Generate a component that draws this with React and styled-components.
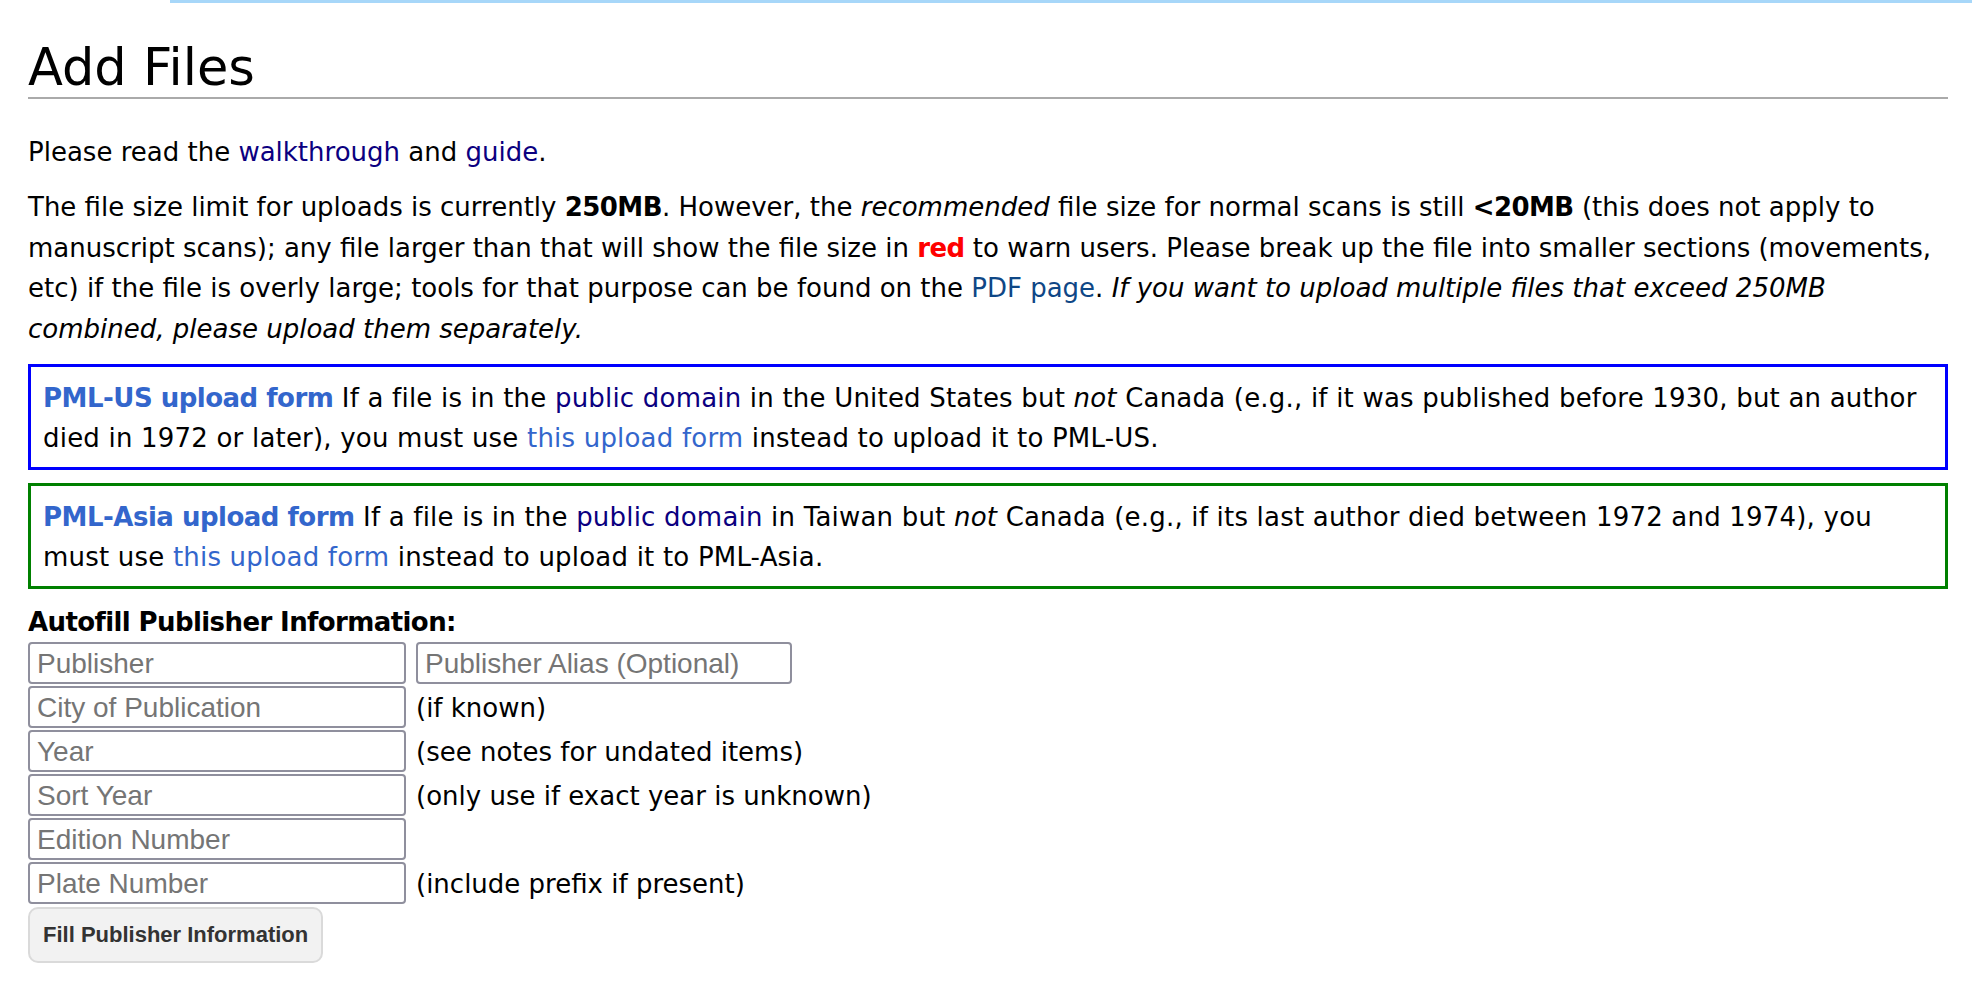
import React from 'react'
import styled, { createGlobalStyle } from 'styled-components'

const GlobalStyle = createGlobalStyle`
  html, body {
    margin: 0;
    padding: 0;
    background: #fff;
  }
  body {
    font-family: "DejaVu Sans", "Noto Sans", sans-serif;
    color: #000;
  }
  b {
    letter-spacing: -0.55px;
  }
`

const TopRule = styled.div`
  margin-left: 170px;
  height: 3px;
  background: #a7d7f9;
`

const Content = styled.main`
  padding: 0 24px 0 28px;
  font-size: 26px;
  line-height: 40.6px;
`

const Heading = styled.h1`
  margin: 36px 0 33px;
  font-size: 51px;
  font-weight: normal;
  line-height: 58px;
  border-bottom: 2px solid #aaa;
`

const Para = styled.p`
  margin: 0 0 14.5px;
`

const Link = styled.a`
  color: ${p => p.$tone || '#0b0080'};
  font-weight: ${p => (p.$bold ? 'bold' : 'inherit')};
  letter-spacing: ${p => (p.$bold ? '-0.5px' : 'inherit')};
  text-decoration: none;
`

const Red = styled.b`
  color: #f00;
`

const NoticeBox = styled.div`
  border: 3px solid ${p => p.$color};
  padding: 11px 16px 9px 12px;
  line-height: 40px;
  letter-spacing: 0.2px;
  margin-bottom: 13px;
`

const FormLabel = styled.div`
  font-weight: bold;
  letter-spacing: -0.6px;
  line-height: 39px;
  margin-top: 14px;
`

const Fields = styled.div`
  display: flex;
  flex-direction: column;
  gap: 2px;
`

const Row = styled.div`
  display: flex;
  align-items: center;
  gap: 10px;
  height: 42px;
`

const Field = styled.input`
  box-sizing: border-box;
  width: ${p => p.$width || 378}px;
  height: 42px;
  margin: 0;
  padding: 3px 7px 0;
  border: 2px solid #8f8f9d;
  border-radius: 4px;
  background: #fff;
  font-family: "Liberation Sans", Arial, sans-serif;
  font-size: 28px;
  color: #000;
  outline: none;
  &::placeholder {
    color: #757575;
  }
`

const Note = styled.span`
  line-height: 30px;
  padding-top: 3px;
`

const FillButton = styled.button`
  box-sizing: border-box;
  margin-top: 3px;
  height: 56px;
  padding: 0 13px;
  border: 2px solid #dadada;
  border-radius: 10px;
  background: #f2f2f2;
  color: #333;
  font-family: "Liberation Sans", Arial, sans-serif;
  font-size: 22px;
  font-weight: bold;
`

const rows = [
  { placeholder: 'City of Publication', note: '(if known)' },
  { placeholder: 'Year', note: '(see notes for undated items)' },
  { placeholder: 'Sort Year', note: '(only use if exact year is unknown)' },
  { placeholder: 'Edition Number' },
  { placeholder: 'Plate Number', note: '(include prefix if present)' }
]

const App = () => (
  <>
    <GlobalStyle />
    <TopRule />
    <Content>
      <Heading>Add Files</Heading>
      <Para>
        Please read the <Link href="#">walkthrough</Link> and <Link href="#">guide</Link>.
      </Para>
      <Para>
        The file size limit for uploads is currently <b>250MB</b>. However, the <i>recommended</i> file size for
        normal scans is still <b>&lt;20MB</b> (this does not apply to manuscript scans); any file larger than that
        will show the file size in <Red>red</Red> to warn users. Please break up the file into smaller sections
        (movements, etc) if the file is overly large; tools for that purpose can be found on the{' '}
        <Link href="#" $tone="#0f4786">PDF page</Link>.{' '}
        <i>If you want to upload multiple files that exceed 250MB combined, please upload them separately.</i>
      </Para>

      <NoticeBox $color="#00f">
        <Link href="#" $tone="#36c" $bold>PML-US upload form</Link> If a file is in the{' '}
        <Link href="#">public domain</Link> in the United States but <i>not</i> Canada (e.g., if it was published
        before 1930, but an author died in 1972 or later), you must use{' '}
        <Link href="#" $tone="#36c">this upload form</Link> instead to upload it to PML-US.
      </NoticeBox>
      <NoticeBox $color="#008000">
        <Link href="#" $tone="#36c" $bold>PML-Asia upload form</Link> If a file is in the{' '}
        <Link href="#">public domain</Link> in Taiwan but <i>not</i> Canada (e.g., if its last author died between
        1972 and 1974), you must use <Link href="#" $tone="#36c">this upload form</Link> instead to upload it to
        PML-Asia.
      </NoticeBox>

      <FormLabel>Autofill Publisher Information:</FormLabel>
      <Fields>
        <Row>
          <Field placeholder="Publisher" />
          <Field placeholder="Publisher Alias (Optional)" $width={376} />
        </Row>
        {rows.map(r => (
          <Row key={r.placeholder}>
            <Field placeholder={r.placeholder} />
            {r.note && <Note>{r.note}</Note>}
          </Row>
        ))}
      </Fields>
      <FillButton type="button">Fill Publisher Information</FillButton>
    </Content>
  </>
)

export default App
